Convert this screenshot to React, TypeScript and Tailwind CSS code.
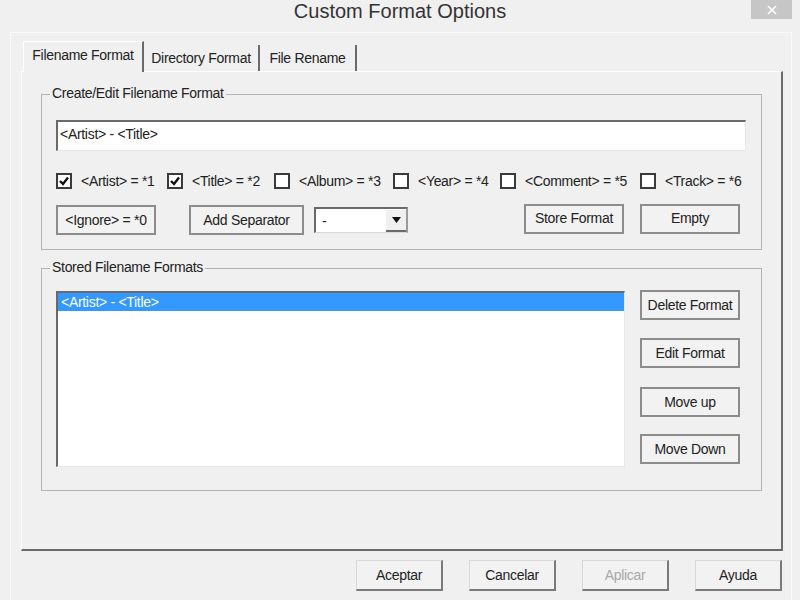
import React from 'react';

const font = { fontFamily: '"Liberation Sans", Arial, sans-serif' };

function Checkbox({ checked }: { checked: boolean }) {
    return (
        <span className="w-[16px] h-[16px] shrink-0 border-2 border-[#3a3a3a] bg-white flex items-center justify-center">
            {checked && (
                <svg width="10" height="10" viewBox="0 0 10 10">
                    <polyline points="1,5 4,8 9,1.5" fill="none" stroke="#111" strokeWidth="2.4" />
                </svg>
            )}
        </span>
    );
}

function Btn({ label, className = '' }: { label: string; className?: string }) {
    return (
        <div
            className={`h-[30px] w-[100px] shrink-0 border-2 border-[#8c8c8c] bg-[#f2f2f2] flex items-center justify-center text-[14px] tracking-[-0.3px] text-[#222] ${className}`}
        >
            {label}
        </div>
    );
}

function FooterBtn({ label, disabled = false }: { label: string; disabled?: boolean }) {
    return (
        <div
            className={`h-[31px] w-[87px] border-t border-l border-[#d8d8d8] border-r-2 border-b-2 border-r-[#7a7a7a] border-b-[#7a7a7a] bg-[#f2f2f2] flex items-center justify-center text-[14px] tracking-[-0.3px] ${
                disabled ? 'text-[#a8a8a8]' : 'text-[#222]'
            }`}
        >
            {label}
        </div>
    );
}

function Group({ title, children, className = '' }: { title: string; children: React.ReactNode; className?: string }) {
    return (
        <div className={`relative border border-[#b4b4b4] ${className}`}>
            <span className="absolute left-[8px] -top-[11px] px-[2px] bg-[#f0f0f0] text-[14px] tracking-[-0.3px] leading-[18px] text-[#222]">
                {title}
            </span>
            {children}
        </div>
    );
}

const tags = [
    { label: '<Artist> = *1', checked: true, w: 'w-[111px]' },
    { label: '<Title> = *2', checked: true, w: 'w-[107px]' },
    { label: '<Album> = *3', checked: false, w: 'w-[119px]' },
    { label: '<Year> = *4', checked: false, w: 'w-[107px]' },
    { label: '<Comment> = *5', checked: false, w: 'w-[140px]' },
    { label: '<Track> = *6', checked: false, w: 'w-[110px]' },
];

export default function App() {
    return (
        <div className="w-[800px] h-[600px] bg-[#f0f0f0] flex flex-col overflow-hidden" style={font}>
            {/* Title bar */}
            <div className="relative h-[32px] shrink-0 flex items-center justify-center">
                <span className="text-[20px] text-[#333] -mt-[10px]">Custom Format Options</span>
                <div className="absolute right-[8px] top-0 w-[41px] h-[19px] bg-[#c6c6c6] flex items-center justify-center">
                    <svg width="10" height="10" viewBox="0 0 10 10">
                        <path d="M1 1 L9 9 M9 1 L1 9" stroke="#fff" strokeWidth="1.6" />
                    </svg>
                </div>
            </div>

            {/* Client area */}
            <div className="ml-[10px] mr-[8px] flex-1 border-l border-t border-r border-[#fafafa] flex flex-col">
                <div className="ml-[10px] mr-[8px] mt-[8px] flex flex-col">
                    {/* Tabs */}
                    <div className="flex items-end h-[30px] pl-[2px]">
                        <div className="h-[31px] w-[121px] -mb-[1px] bg-[#f0f0f0] border-t border-l border-white border-r-2 border-r-[#6a6a6a] flex items-center justify-center text-[14px] tracking-[-0.3px] text-[#222] pb-[4px] relative z-10">
                            Filename Format
                        </div>
                        <div className="h-[26px] w-[116px] border-r-2 border-[#6a6a6a] flex items-center justify-center text-[14px] tracking-[-0.3px] text-[#222]">
                            Directory Format
                        </div>
                        <div className="h-[26px] w-[97px] border-r-2 border-[#6a6a6a] flex items-center justify-center text-[14px] tracking-[-0.3px] text-[#222]">
                            File Rename
                        </div>
                    </div>

                    {/* Tab panel */}
                    <div className="h-[480px] border-t border-l border-white border-r-2 border-b-2 border-r-[#6a6a6a] border-b-[#6a6a6a] px-[19px] pt-[22px]">
                        <Group title="Create/Edit Filename Format" className="h-[156px] px-[14px] pt-[25px]">
                            <div className="h-[31px] w-[690px] bg-white border-t-2 border-l-2 border-[#6a6a6a] border-b border-r border-b-[#e6e6e6] border-r-[#e6e6e6] flex items-center px-[2px] pb-[3px] text-[14px] tracking-[-0.3px] text-[#222]">
                                {'<Artist> - <Title>'}
                            </div>
                            <div className="mt-[22px] flex items-center h-[16px]">
                                {tags.map((t) => (
                                    <div key={t.label} className={`flex items-center gap-[9px] shrink-0 ${t.w}`}>
                                        <Checkbox checked={t.checked} />
                                        <span className="text-[14px] tracking-[-0.3px] text-[#222] whitespace-nowrap">{t.label}</span>
                                    </div>
                                ))}
                            </div>
                            <div className="mt-[13px] flex items-center">
                                <Btn label="<Ignore> = *0" className="mt-[3px]" />
                                <Btn label="Add Separator" className="ml-[33px] w-[115px] mt-[3px]" />
                                <div className="ml-[10px] mt-[3px] h-[26px] w-[94px] bg-white border-t-2 border-l-2 border-[#6a6a6a] border-r-2 border-b border-r-[#9a9a9a] border-b-[#d8d8d8] flex items-center">
                                    <span className="flex-1 pl-[6px] text-[14px] text-[#222] leading-none">-</span>
                                    <span className="w-[20px] h-[22px] bg-[#f0f0f0] border-b-2 border-[#6a6a6a] flex items-center justify-center">
                                        <svg width="9" height="6" viewBox="0 0 9 6">
                                            <path d="M0 0 H9 L4.5 6 Z" fill="#111" />
                                        </svg>
                                    </span>
                                </div>
                                <Btn label="Store Format" className="ml-[116px]" />
                                <Btn label="Empty" className="ml-[16px]" />
                            </div>
                        </Group>

                        <Group title="Stored Filename Formats" className="mt-[18px] h-[223px] px-[14px] pt-[22px] flex">
                            <div className="h-[176px] w-[569px] bg-white border-t-2 border-l-2 border-[#6a6a6a] border-b border-r border-b-[#e6e6e6] border-r-[#e6e6e6]">
                                <div className="h-[18px] bg-[#3399ff] text-white text-[14px] tracking-[-0.3px] leading-[18px] px-[3px]">
                                    {'<Artist> - <Title>'}
                                </div>
                            </div>
                            <div className="ml-[15px] flex flex-col gap-[18px] -mt-[1px]">
                                <Btn label="Delete Format" />
                                <Btn label="Edit Format" />
                                <Btn label="Move up" className="mt-[1px]" />
                                <Btn label="Move Down" className="-mt-[1px]" />
                            </div>
                        </Group>
                    </div>
                </div>

                {/* Footer buttons */}
                <div className="mt-[9px] mr-[9px] flex justify-end gap-[26px]">
                    <FooterBtn label="Aceptar" />
                    <FooterBtn label="Cancelar" />
                    <FooterBtn label="Aplicar" disabled />
                    <FooterBtn label="Ayuda" />
                </div>
            </div>
        </div>
    );
}
